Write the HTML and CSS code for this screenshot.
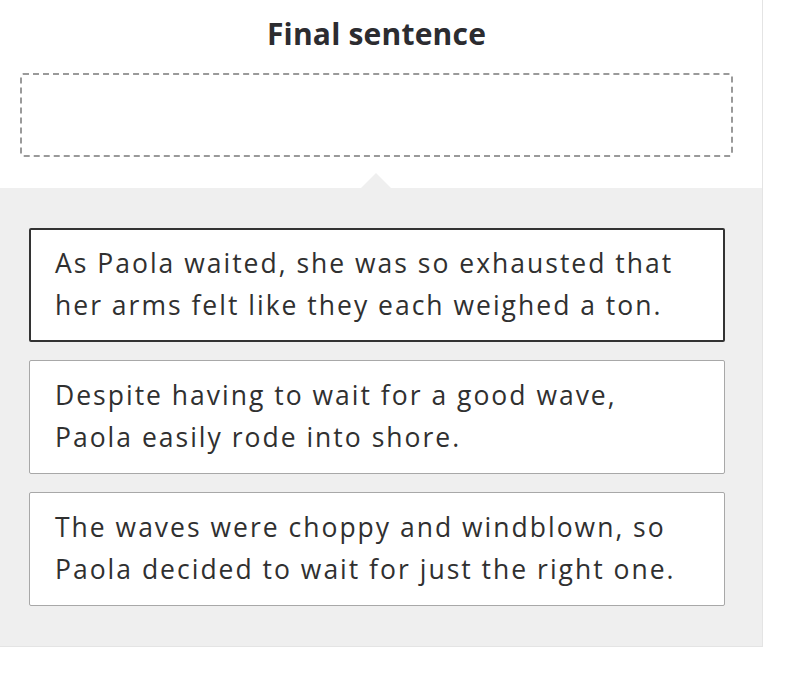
FILE: index.html
```html
<!DOCTYPE html>
<html>
<head>
<meta charset="utf-8">
<link rel="stylesheet" href="styles.css">
</head>
<body>
<div class="frame">
  <div class="header">
    <h1 class="title">Final sentence</h1>
    <div class="dropzone"></div>
  </div>
  <div class="panel">
    <div class="card selected">As Paola waited, she was so exhausted that her arms felt like they each weighed a ton.</div>
    <div class="card">Despite having to wait for a good wave, Paola easily rode into shore.</div>
    <div class="card">The waves were choppy and windblown, so Paola decided to wait for just the right one.</div>
  </div>
</div>
</body>
</html>
```

FILE: styles.css
```css
html, body {
  margin: 0;
  padding: 0;
  background: #ffffff;
}
body {
  font-family: "Open Sans", "Noto Sans", sans-serif;
  color: #303030;
}
.frame {
  width: 762px;
  border-right: 1px solid #e4e4e4;
  border-bottom: 1px solid #e4e4e4;
}
.header {
  padding: 16px 29px 31px 20px;
  display: flex;
  flex-direction: column;
  align-items: center;
}
.title {
  margin: 0;
  font-size: 30px;
  line-height: 36px;
  font-weight: 700;
  color: #2c2c30;
  letter-spacing: 0.2px;
}
.dropzone {
  align-self: stretch;
  margin-top: 21px;
  height: 80px;
  border: 2px dashed #9a9a9a;
  border-radius: 3px;
}
.panel {
  position: relative;
  background: #efefef;
  padding: 40px 37px 40px 29px;
  display: flex;
  flex-direction: column;
  gap: 18px;
}
.panel::before {
  content: "";
  position: absolute;
  top: -15px;
  left: 361px;
  width: 0;
  height: 0;
  border-left: 15px solid transparent;
  border-right: 15px solid transparent;
  border-bottom: 15px solid #efefef;
}
.card {
  background: #ffffff;
  border: 1px solid #a8a8a8;
  border-radius: 2px;
  padding: 13px 28px 15px 25px;
  font-size: 26.5px;
  line-height: 42px;
  letter-spacing: 2px;
  min-height: 84px;
}
.card.selected {
  border: 2px solid #333333;
  padding: 12px 27px 14px 24px;
}
```
